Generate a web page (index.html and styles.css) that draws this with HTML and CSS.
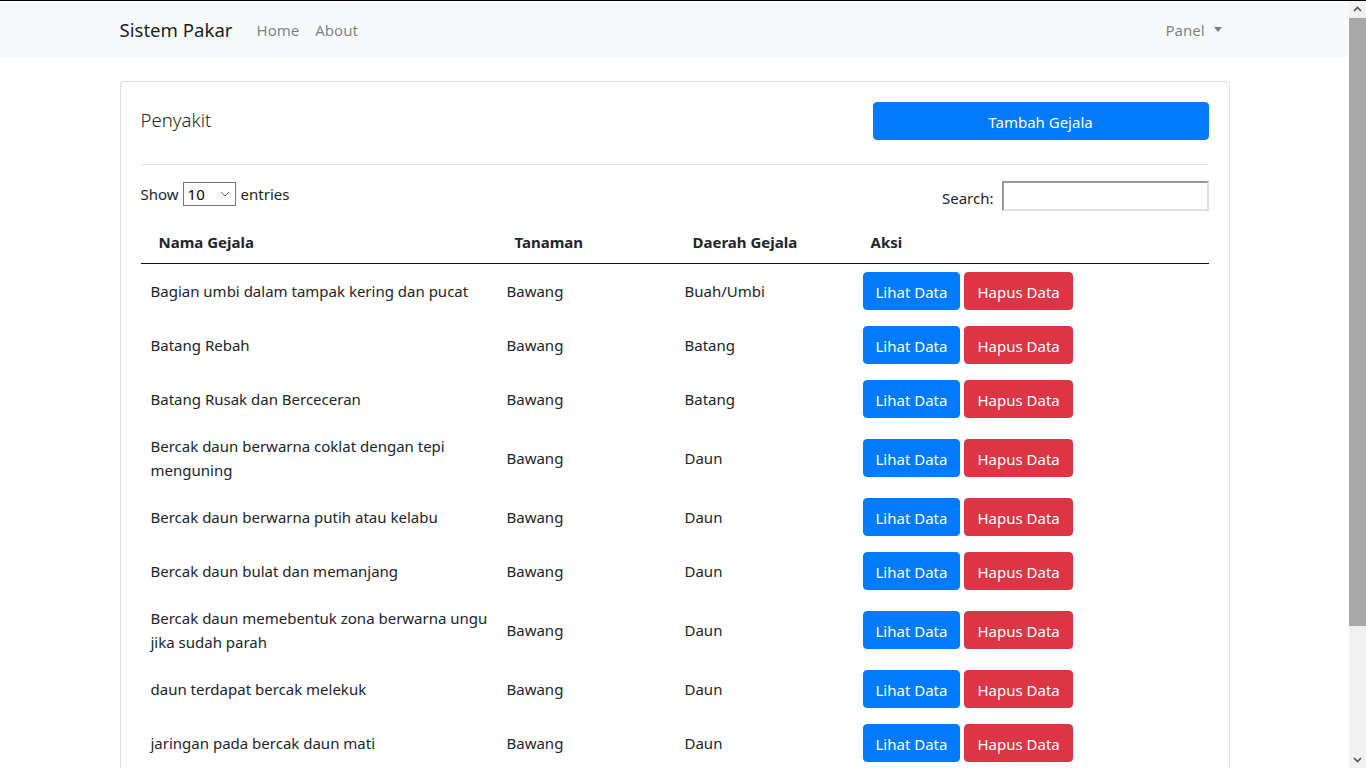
FILE: index.html
```html
<!DOCTYPE html>
<html lang="id">
<head>
<meta charset="utf-8">
<title>Sistem Pakar</title>
<link rel="stylesheet" href="styles.css">
</head>
<body>
<div class="screen">
  <div class="page">
    <nav class="navbar">
      <div class="container nav-inner">
        <a class="brand" href="#">Sistem Pakar</a>
        <ul class="nav-links">
          <li><a class="nav-link" href="#">Home</a></li>
          <li><a class="nav-link" href="#">About</a></li>
        </ul>
        <div class="nav-right">
          <a class="nav-link dropdown-toggle" href="#">Panel</a>
        </div>
      </div>
    </nav>

    <main class="container main">
      <div class="card">
        <div class="card-body">
          <div class="card-head">
            <h5 class="card-title">Penyakit</h5>
            <div class="head-action">
              <button class="btn btn-primary btn-block">Tambah Gejala</button>
            </div>
          </div>
          <hr class="divider">
          <div class="dt-top">
            <label class="dt-length">Show
              <span class="select-wrap">
                <select class="dt-select">
                  <option>10</option>
                  <option>25</option>
                  <option>50</option>
                  <option>100</option>
                </select>
                <svg class="select-arrow" width="10" height="6" viewBox="0 0 10 6"><polyline points="1,1 5,5 9,1" fill="none" stroke="#6a6a6a" stroke-width="1"/></svg>
              </span>
              entries</label>
            <label class="dt-filter">Search:<input class="dt-search" type="search"></label>
          </div>
          <table class="dt">
            <colgroup>
              <col class="c-nama">
              <col class="c-tan">
              <col class="c-daerah">
              <col class="c-aksi">
            </colgroup>
            <thead>
              <tr>
                <th>Nama Gejala</th>
                <th>Tanaman</th>
                <th>Daerah Gejala</th>
                <th>Aksi</th>
              </tr>
            </thead>
            <tbody>
              <tr>
                <td>Bagian umbi dalam tampak kering dan pucat</td>
                <td>Bawang</td>
                <td>Buah/Umbi</td>
                <td><div class="aksi"><button class="btn btn-primary">Lihat Data</button><button class="btn btn-danger">Hapus Data</button></div></td>
              </tr>
              <tr>
                <td>Batang Rebah</td>
                <td>Bawang</td>
                <td>Batang</td>
                <td><div class="aksi"><button class="btn btn-primary">Lihat Data</button><button class="btn btn-danger">Hapus Data</button></div></td>
              </tr>
              <tr>
                <td>Batang Rusak dan Berceceran</td>
                <td>Bawang</td>
                <td>Batang</td>
                <td><div class="aksi"><button class="btn btn-primary">Lihat Data</button><button class="btn btn-danger">Hapus Data</button></div></td>
              </tr>
              <tr>
                <td>Bercak daun berwarna coklat dengan tepi menguning</td>
                <td>Bawang</td>
                <td>Daun</td>
                <td><div class="aksi"><button class="btn btn-primary">Lihat Data</button><button class="btn btn-danger">Hapus Data</button></div></td>
              </tr>
              <tr>
                <td>Bercak daun berwarna putih atau kelabu</td>
                <td>Bawang</td>
                <td>Daun</td>
                <td><div class="aksi"><button class="btn btn-primary">Lihat Data</button><button class="btn btn-danger">Hapus Data</button></div></td>
              </tr>
              <tr>
                <td>Bercak daun bulat dan memanjang</td>
                <td>Bawang</td>
                <td>Daun</td>
                <td><div class="aksi"><button class="btn btn-primary">Lihat Data</button><button class="btn btn-danger">Hapus Data</button></div></td>
              </tr>
              <tr>
                <td>Bercak daun memebentuk zona berwarna ungu jika sudah parah</td>
                <td>Bawang</td>
                <td>Daun</td>
                <td><div class="aksi"><button class="btn btn-primary">Lihat Data</button><button class="btn btn-danger">Hapus Data</button></div></td>
              </tr>
              <tr>
                <td>daun terdapat bercak melekuk</td>
                <td>Bawang</td>
                <td>Daun</td>
                <td><div class="aksi"><button class="btn btn-primary">Lihat Data</button><button class="btn btn-danger">Hapus Data</button></div></td>
              </tr>
              <tr>
                <td>jaringan pada bercak daun mati</td>
                <td>Bawang</td>
                <td>Daun</td>
                <td><div class="aksi"><button class="btn btn-primary">Lihat Data</button><button class="btn btn-danger">Hapus Data</button></div></td>
              </tr>
            </tbody>
          </table>
        </div>
      </div>
    </main>
  </div>

  <div class="scrollbar" aria-hidden="true">
    <div class="sb-btn">
      <svg width="17" height="17" viewBox="0 0 17 17"><polyline points="5,10 8.5,6.5 12,10" fill="none" stroke="#505050" stroke-width="1.6"/></svg>
    </div>
    <div class="sb-track">
      <div class="sb-thumb"></div>
    </div>
    <div class="sb-btn">
      <svg width="17" height="17" viewBox="0 0 17 17"><polyline points="5,7 8.5,10.5 12,7" fill="none" stroke="#505050" stroke-width="1.6"/></svg>
    </div>
  </div>
</div>
</body>
</html>
```

FILE: styles.css
```css
* { box-sizing: border-box; }

html, body {
  margin: 0;
  padding: 0;
  height: 768px;
  overflow: hidden;
  background: #fff;
}

body {
  font-family: "Noto Sans", "Open Sans", Arial, sans-serif;
  font-size: 15px;
  line-height: 24px;
  color: #212529;
}

.screen {
  display: flex;
  height: 768px;
  border-top: 1px solid #000;
}

.page {
  flex: 1;
  min-width: 0;
  overflow: hidden;
}

.container {
  width: 1140px;
  margin: 0 auto;
  padding: 0 15px;
}

/* Navbar */
.navbar {
  background: #f8f9fa;
  padding: 8px 0;
}

.nav-inner {
  display: flex;
  align-items: center;
  height: 40px;
}

.brand {
  font-size: 18.6px;
  line-height: 30px;
  padding: 6px 0 4px;
  margin-right: 16px;
  color: rgba(0, 0, 0, .9);
  text-decoration: none;
  white-space: nowrap;
}

.nav-links {
  display: flex;
  list-style: none;
  margin: 0;
  padding: 0;
}

.nav-link {
  display: block;
  padding: 9px 8px 7px;
  color: rgba(0, 0, 0, .5);
  text-decoration: none;
}

.nav-right {
  margin-left: auto;
}

.dropdown-toggle::after {
  content: "";
  display: inline-block;
  margin-left: 9px;
  vertical-align: 4px;
  border-top: 5px solid;
  border-right: 4.5px solid transparent;
  border-left: 4.5px solid transparent;
}

/* Card */
.main {
  padding-top: 24px;
}

.card {
  border: 1px solid rgba(0, 0, 0, .125);
  border-radius: 4px;
  background: #fff;
}

.card-body {
  padding: 20px;
}

.card-head {
  display: grid;
  grid-template-columns: 1fr 336px;
  height: 46px;
}

.card-title {
  margin: 0;
  padding-top: 6px;
  font-size: 18.6px;
  line-height: 24px;
  font-weight: 300;
  color: #212529;
}

.btn {
  display: inline-block;
  font-family: inherit;
  font-size: 15px;
  line-height: 24px;
  padding: 7px 12px 5px;
  border: 1px solid transparent;
  border-radius: 4px;
  color: #fff;
  cursor: pointer;
  white-space: nowrap;
}

.btn-block {
  display: block;
  width: 100%;
}

.btn-primary {
  background: #007bff;
  border-color: #007bff;
}

.btn-danger {
  background: #dc3545;
  border-color: #dc3545;
}

.divider {
  margin: 16px 0;
  border: 0;
  border-top: 1px solid rgba(0, 0, 0, .1);
}

/* DataTables top */
.dt-top {
  display: flex;
  justify-content: space-between;
  align-items: center;
  height: 30px;
  margin-bottom: 8px;
}

.dt-length {
  display: flex;
  align-items: center;
  margin-top: -4px;
}

.select-wrap {
  position: relative;
  display: inline-flex;
  margin: 0 5px 0 4px;
}

.dt-select {
  -webkit-appearance: none;
  appearance: none;
  width: 53px;
  height: 24px;
  margin: 0;
  padding: 0 0 0 4px;
  font-family: inherit;
  font-size: 15px;
  line-height: 22px;
  color: #000;
  border: 1px solid #767676;
  border-radius: 0;
  background: #fff;
}

.select-arrow {
  position: absolute;
  right: 6px;
  top: 9px;
  pointer-events: none;
}

.dt-filter {
  display: flex;
  align-items: center;
  margin-top: 3px;
}

.dt-search {
  width: 207px;
  height: 30px;
  margin-left: 8px;
  margin-top: -3px;
  padding: 1px 2px;
  border-style: solid;
  border-width: 2px;
  border-color: #999 #e0e0e0 #e0e0e0 #999;
  background: #fff;
  font-family: inherit;
}

/* Table */
.dt {
  width: 100%;
  table-layout: fixed;
  border-collapse: separate;
  border-spacing: 0;
}

.c-nama { width: 356px; }
.c-tan { width: 178px; }
.c-daerah { width: 178px; }
.c-aksi { width: 356px; }

.dt th {
  text-align: left;
  font-weight: 700;
  padding: 11px 18px 9px;
  border-bottom: 1px solid #111;
}

.dt td {
  padding: 8px 10px;
  vertical-align: middle;
}

.dt td:first-child {
  padding-right: 2px;
}

.aksi {
  display: flex;
  gap: 4px;
}

/* Fake scrollbar */
.scrollbar {
  width: 17px;
  flex: none;
  display: flex;
  flex-direction: column;
  background: #f1f1f1;
}

.sb-btn {
  height: 17px;
  flex: none;
  display: flex;
}

.sb-track {
  flex: 1;
}

.sb-thumb {
  height: 608px;
  background: #a8a8a8;
}
```
